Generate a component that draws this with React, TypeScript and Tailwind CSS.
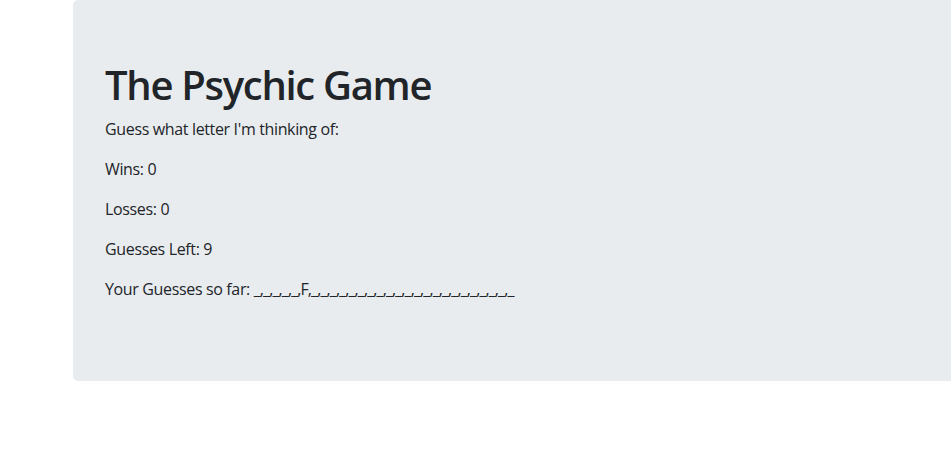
export default function App() {
  const guesses = ["_", "_", "_", "_", "_", "F", ...Array(22).fill("_")];

  return (
    <div className="overflow-hidden w-full bg-white text-[#212529]" style={{ fontFamily: '"Open Sans", "Noto Sans", sans-serif' }}>
      <div className="ml-[73px] -mr-[20px] mb-8 rounded-[5px] bg-[#e9ecef] px-8 pt-[61px] pb-16">
        <h1 className="mb-2 text-[40px] leading-[1.2] font-semibold tracking-[-1.3px]">The Psychic Game</h1>
        <div className="tracking-[-0.35px]">
          <p className="mb-4 text-base leading-6">Guess what letter I'm thinking of:</p>
          <p className="mb-4 text-base leading-6">Wins: 0</p>
          <p className="mb-4 text-base leading-6">Losses: 0</p>
          <p className="mb-4 text-base leading-6">Guesses Left: 9</p>
          <p className="mb-4 text-base leading-6">
            Your Guesses so far: <span className="tracking-[-0.9px]">{guesses.join(",")}</span>
          </p>
        </div>
      </div>
    </div>
  );
}
